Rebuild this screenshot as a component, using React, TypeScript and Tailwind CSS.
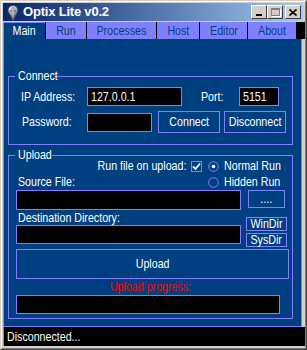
import React from "react";

const FONT = { fontFamily: '"Liberation Sans", Arial, sans-serif' };

// narrow text: the original form uses a tall condensed face
function T({ children, o = "origin-left" }: { children: React.ReactNode; o?: string }) {
  return <span className={`inline-block whitespace-nowrap scale-x-[0.82] ${o}`}>{children}</span>;
}

function GemIcon() {
  return (
    <svg width="12" height="16" viewBox="0 0 12 16">
      <defs>
        <linearGradient id="gem" x1="0" y1="0" x2="1" y2="1">
          <stop offset="0" stopColor="#ffffff" />
          <stop offset="0.5" stopColor="#b8bcc4" />
          <stop offset="1" stopColor="#5a606c" />
        </linearGradient>
      </defs>
      <path d="M1 6 C1 2 4 0.5 6 0.5 C8 0.5 11 2 11 6 L6 15.5 Z" fill="url(#gem)" stroke="#3a3e48" strokeWidth="0.8" />
      <path d="M1 6 L11 6 M3.5 6 L6 15.5 L8.5 6 M3.5 6 L6 2 L8.5 6" fill="none" stroke="#5a606c" strokeWidth="0.6" />
    </svg>
  );
}

function CaptionButton({ children }: { children: React.ReactNode }) {
  return (
    <div className="w-[16px] h-[14px] bg-[#d4d0c8] border-t border-l border-t-white border-l-white border-r border-b border-r-[#404040] border-b-[#404040] flex items-center justify-center">
      {children}
    </div>
  );
}

function Field({ className = "", children }: { className?: string; children?: React.ReactNode }) {
  return (
    <div className={`bg-black border border-[#8080ff] text-white flex items-center pl-[3px] ${className}`}>
      {children && <T>{children}</T>}
    </div>
  );
}

function Btn({ className = "", children }: { className?: string; children: React.ReactNode }) {
  return (
    <div className={`border border-[#8080ff] bg-[#004080] text-white flex items-center justify-center ${className}`}>
      <T o="origin-center">{children}</T>
    </div>
  );
}

function Radio({ checked }: { checked?: boolean }) {
  return (
    <svg width="11" height="11" viewBox="0 0 11 11">
      <circle cx="5.5" cy="5.5" r="4.8" fill="none" stroke="#8080ff" strokeWidth="1" />
      {checked && <circle cx="5.5" cy="5.5" r="1.8" fill="#ffffff" />}
    </svg>
  );
}

const TABS = [
  { label: "Run", w: "w-[41px]" },
  { label: "Processes", w: "w-[70px]" },
  { label: "Host", w: "w-[43px]" },
  { label: "Editor", w: "w-[48px]" },
  { label: "About", w: "w-[49px]" },
];

export default function App() {
  return (
    <div
      className="w-[307px] h-[350px] bg-[#d4d0c8] border-t border-l border-t-[#d4d0c8] border-l-[#d4d0c8] border-r border-b border-r-[#404040] border-b-[#404040] flex flex-col overflow-hidden"
      style={FONT}
    >
      <div className="flex-1 flex flex-col border-t border-l border-white border-r border-b border-r-[#808080] border-b-[#808080] pl-[1px] pt-[1px]">
        {/* Title bar */}
        <div className="h-[18px] mr-[2px] flex items-center bg-gradient-to-r from-[#0a246a] to-[#a6caf0]">
          <div className="ml-[4px] mt-[1px]">
            <GemIcon />
          </div>
          <span className="ml-[4px] text-white font-bold text-[13px] leading-[14px] tracking-[-0.2px]">Optix Lite v0.2</span>
          <div className="ml-auto mr-[2px] flex">
            <CaptionButton>
              <div className="w-[6px] h-[2px] bg-black mt-[6px] -ml-[1px]" />
            </CaptionButton>
            <CaptionButton>
              <div className="w-[9px] h-[8px] border border-[#808080] border-t-2 shadow-[1px_1px_0_#ffffff]" />
            </CaptionButton>
            <div className="ml-[2px]">
              <CaptionButton>
                <svg width="8" height="7" viewBox="0 0 8 7">
                  <path d="M0.5 0.5 L7.5 6.5 M7.5 0.5 L0.5 6.5" stroke="#000" strokeWidth="1.6" />
                </svg>
              </CaptionButton>
            </div>
          </div>
        </div>

        {/* Client area */}
        <div className="mt-[1px] flex flex-col text-[13px] leading-[14px]">
          {/* Tabs */}
          <div className="h-[17px] flex bg-black">
            <div className="w-[42px] bg-[#004080] border-l border-t border-[#8080ff] text-white flex items-center justify-center">
              <T o="origin-center">Main</T>
            </div>
            {TABS.map((t) => (
              <div
                key={t.label}
                className={`${t.w} border-l border-black bg-[#8080ff] text-[#004080] flex items-center justify-center`}
              >
                <T o="origin-center">{t.label}</T>
              </div>
            ))}
            <div className="flex-1 bg-black" />
          </div>

          {/* Panel */}
          <div className="w-[299px] h-[288px] bg-[#004080] border-l border-r border-b border-[#8080ff] text-white flex flex-col pl-[4px]">
            {/* Connect */}
            <div className="relative mt-[37px] w-[285px] h-[69px] border border-[#8080ff] flex flex-col">
              <span className="absolute -top-[8px] left-[6px] w-[40px] pl-[3px] bg-[#004080]">
                <T>Connect</T>
              </span>
              <div className="mt-[10px] flex items-center h-[19px]">
                <span className="w-[63px] text-right">
                  <T o="origin-right">IP Address:</T>
                </span>
                <Field className="ml-[15px] w-[95px] h-[19px]">127.0.0.1</Field>
                <span className="w-[57px] pl-[19px]">
                  <T>Port:</T>
                </span>
                <Field className="w-[40px] h-[19px]">5151</Field>
              </div>
              <div className="mt-[5px] flex items-center h-[22px]">
                <span className="w-[63px] text-right">
                  <T o="origin-right">Password:</T>
                </span>
                <Field className="ml-[15px] w-[65px] h-[19px]" />
                <Btn className="ml-[6px] w-[62px] h-[22px]">Connect</Btn>
                <Btn className="ml-[4px] w-[62px] h-[22px]">Disconnect</Btn>
              </div>
            </div>

            {/* Upload */}
            <div className="relative mt-[10px] w-[285px] h-[164px] border border-[#8080ff] flex flex-col">
              <span className="absolute -top-[8px] left-[6px] w-[37px] pl-[3px] bg-[#004080]">
                <T>Upload</T>
              </span>
              <div className="mt-[2px] grid grid-cols-[199px_1fr] grid-rows-[16px_16px]">
                <div className="flex items-center justify-end pr-[6px]">
                  <T o="origin-right">Run file on upload:</T>
                  <div className="ml-[5px] w-[11px] h-[11px] border border-[#8080ff] flex items-center justify-center">
                    <svg width="9" height="9" viewBox="0 0 9 9">
                      <path d="M1 4.5 L3.5 7 L8 1.5" fill="none" stroke="#ffffff" strokeWidth="1.8" />
                    </svg>
                  </div>
                </div>
                <div className="flex items-center">
                  <Radio checked />
                  <span className="ml-[5px]">
                    <T>Normal Run</T>
                  </span>
                </div>
                <div className="flex items-center pl-[9px]">
                  <T>Source File:</T>
                </div>
                <div className="flex items-center">
                  <Radio />
                  <span className="ml-[5px]">
                    <T>Hidden Run</T>
                  </span>
                </div>
              </div>
              <div className="flex items-start">
                <Field className="ml-[7px] w-[225px] h-[20px]" />
                <Btn className="ml-[7px] w-[37px] h-[18px]">....</Btn>
              </div>
              <div className="flex items-start">
                <div className="flex flex-col">
                  <span className="pl-[9px] h-[15px] flex items-center">
                    <T>Destination Directory:</T>
                  </span>
                  <Field className="ml-[7px] w-[225px] h-[19px]" />
                </div>
                <div className="ml-[5px] mt-[7px] flex flex-col gap-[2px]">
                  <Btn className="w-[41px] h-[14px]">WinDir</Btn>
                  <Btn className="w-[41px] h-[14px]">SysDir</Btn>
                </div>
              </div>
              <Btn className="ml-[7px] mt-[2px] w-[273px] h-[30px]">Upload</Btn>
              <div className="h-[16px] flex items-center justify-center text-[#ff0000]">
                <T o="origin-center">Upload progress:</T>
              </div>
              <Field className="ml-[7px] w-[264px] h-[19px]" />
            </div>
          </div>

          {/* Status bar */}
          <div className="h-[19px] bg-black border-l border-[#8080ff] text-white flex items-center pl-[3px]">
            <T>Disconnected...</T>
          </div>
        </div>
      </div>
    </div>
  );
}
